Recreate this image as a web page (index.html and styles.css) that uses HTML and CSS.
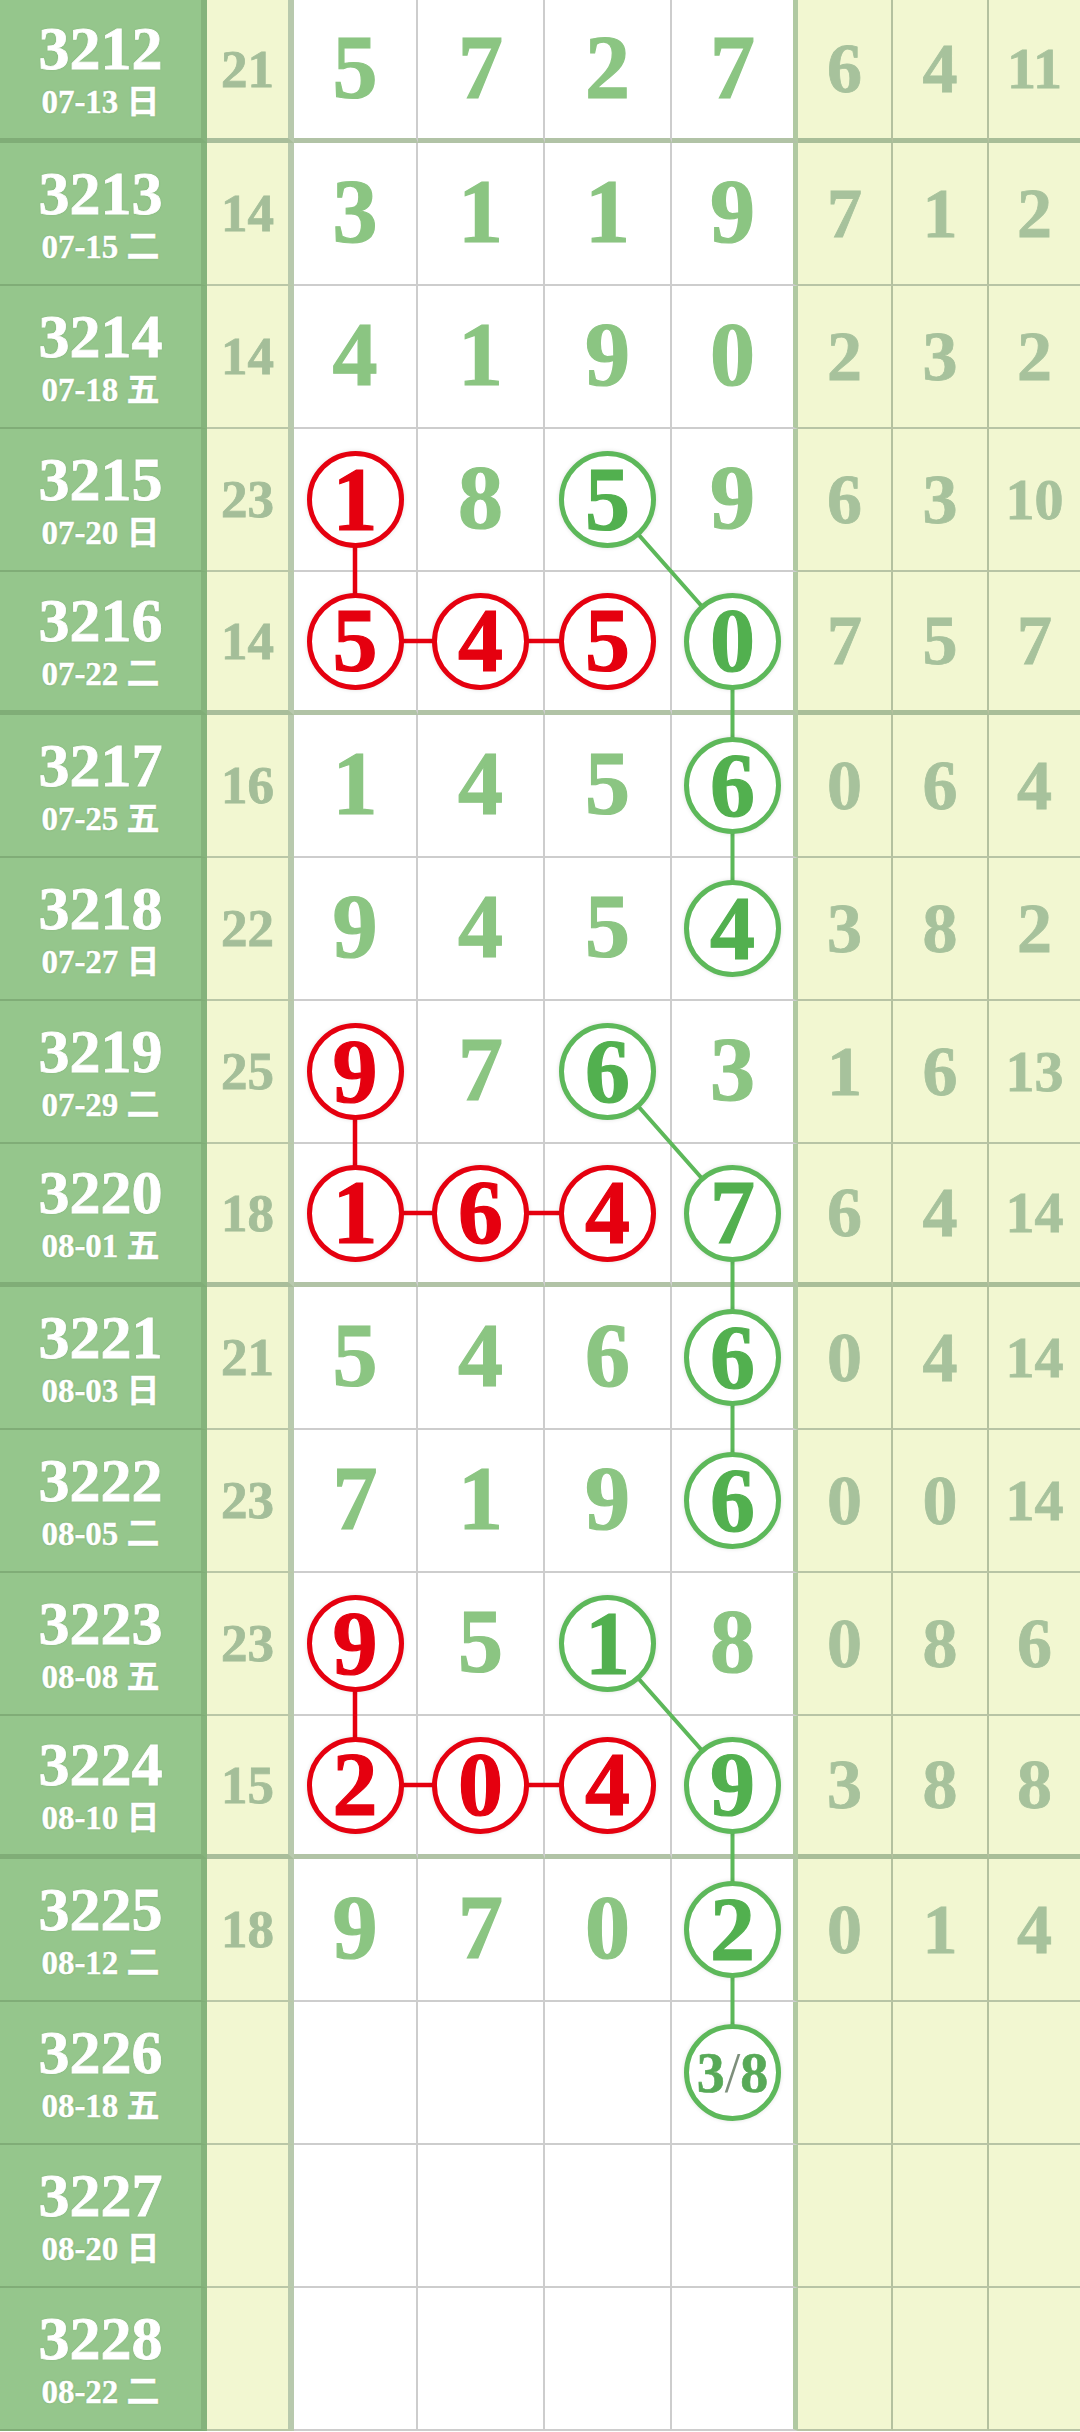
FILE: index.html
```html
<!DOCTYPE html>
<html lang="zh">
<head>
    <meta charset="UTF-8">
    <meta name="viewport" content="width=device-width, initial-scale=1.0">
    <title>走势图</title>
    <link rel="stylesheet" href="styles.css">
</head>
<body>
    <div class="chart">
        <div class="row sep">
            <div class="no"><b>3212</b><span>07-13 日</span></div>
            <div class="sum">21</div>
            <div class="d">5</div><div class="d">7</div><div class="d">2</div><div class="d">7</div>
            <div class="k">6</div><div class="k">4</div><div class="k s">11</div>
        </div>
        <div class="row">
            <div class="no"><b>3213</b><span>07-15 二</span></div>
            <div class="sum">14</div>
            <div class="d">3</div><div class="d">1</div><div class="d">1</div><div class="d">9</div>
            <div class="k">7</div><div class="k">1</div><div class="k">2</div>
        </div>
        <div class="row">
            <div class="no"><b>3214</b><span>07-18 五</span></div>
            <div class="sum">14</div>
            <div class="d">4</div><div class="d">1</div><div class="d">9</div><div class="d">0</div>
            <div class="k">2</div><div class="k">3</div><div class="k">2</div>
        </div>
        <div class="row">
            <div class="no"><b>3215</b><span>07-20 日</span></div>
            <div class="sum">23</div>
            <div class="d"><span class="ball red">1</span></div><div class="d">8</div><div class="d"><span class="ball green">5</span></div><div class="d">9</div>
            <div class="k">6</div><div class="k">3</div><div class="k s">10</div>
        </div>
        <div class="row sep">
            <div class="no"><b>3216</b><span>07-22 二</span></div>
            <div class="sum">14</div>
            <div class="d"><span class="ball red">5</span></div><div class="d"><span class="ball red">4</span></div><div class="d"><span class="ball red">5</span></div><div class="d"><span class="ball green">0</span></div>
            <div class="k">7</div><div class="k">5</div><div class="k">7</div>
        </div>
        <div class="row">
            <div class="no"><b>3217</b><span>07-25 五</span></div>
            <div class="sum">16</div>
            <div class="d">1</div><div class="d">4</div><div class="d">5</div><div class="d"><span class="ball green">6</span></div>
            <div class="k">0</div><div class="k">6</div><div class="k">4</div>
        </div>
        <div class="row">
            <div class="no"><b>3218</b><span>07-27 日</span></div>
            <div class="sum">22</div>
            <div class="d">9</div><div class="d">4</div><div class="d">5</div><div class="d"><span class="ball green">4</span></div>
            <div class="k">3</div><div class="k">8</div><div class="k">2</div>
        </div>
        <div class="row">
            <div class="no"><b>3219</b><span>07-29 二</span></div>
            <div class="sum">25</div>
            <div class="d"><span class="ball red">9</span></div><div class="d">7</div><div class="d"><span class="ball green">6</span></div><div class="d">3</div>
            <div class="k">1</div><div class="k">6</div><div class="k s">13</div>
        </div>
        <div class="row sep">
            <div class="no"><b>3220</b><span>08-01 五</span></div>
            <div class="sum">18</div>
            <div class="d"><span class="ball red">1</span></div><div class="d"><span class="ball red">6</span></div><div class="d"><span class="ball red">4</span></div><div class="d"><span class="ball green">7</span></div>
            <div class="k">6</div><div class="k">4</div><div class="k s">14</div>
        </div>
        <div class="row">
            <div class="no"><b>3221</b><span>08-03 日</span></div>
            <div class="sum">21</div>
            <div class="d">5</div><div class="d">4</div><div class="d">6</div><div class="d"><span class="ball green">6</span></div>
            <div class="k">0</div><div class="k">4</div><div class="k s">14</div>
        </div>
        <div class="row">
            <div class="no"><b>3222</b><span>08-05 二</span></div>
            <div class="sum">23</div>
            <div class="d">7</div><div class="d">1</div><div class="d">9</div><div class="d"><span class="ball green">6</span></div>
            <div class="k">0</div><div class="k">0</div><div class="k s">14</div>
        </div>
        <div class="row">
            <div class="no"><b>3223</b><span>08-08 五</span></div>
            <div class="sum">23</div>
            <div class="d"><span class="ball red">9</span></div><div class="d">5</div><div class="d"><span class="ball green">1</span></div><div class="d">8</div>
            <div class="k">0</div><div class="k">8</div><div class="k">6</div>
        </div>
        <div class="row sep">
            <div class="no"><b>3224</b><span>08-10 日</span></div>
            <div class="sum">15</div>
            <div class="d"><span class="ball red">2</span></div><div class="d"><span class="ball red">0</span></div><div class="d"><span class="ball red">4</span></div><div class="d"><span class="ball green">9</span></div>
            <div class="k">3</div><div class="k">8</div><div class="k">8</div>
        </div>
        <div class="row">
            <div class="no"><b>3225</b><span>08-12 二</span></div>
            <div class="sum">18</div>
            <div class="d">9</div><div class="d">7</div><div class="d">0</div><div class="d"><span class="ball green">2</span></div>
            <div class="k">0</div><div class="k">1</div><div class="k">4</div>
        </div>
        <div class="row">
            <div class="no"><b>3226</b><span>08-18 五</span></div>
            <div class="sum"></div>
            <div class="d"></div><div class="d"></div><div class="d"></div><div class="d"><span class="ball green guess">3<i>/</i>8</span></div>
            <div class="k"></div><div class="k"></div><div class="k"></div>
        </div>
        <div class="row">
            <div class="no"><b>3227</b><span>08-20 日</span></div>
            <div class="sum"></div>
            <div class="d"></div><div class="d"></div><div class="d"></div><div class="d"></div>
            <div class="k"></div><div class="k"></div><div class="k"></div>
        </div>
        <div class="row">
            <div class="no"><b>3228</b><span>08-22 二</span></div>
            <div class="sum"></div>
            <div class="d"></div><div class="d"></div><div class="d"></div><div class="d"></div>
            <div class="k"></div><div class="k"></div><div class="k"></div>
        </div>

        <!-- connection lines, drawn under the balls -->
        <svg class="links" width="1080" height="2432" viewBox="0 0 1080 2432">
            <g class="red-line">
                <path d="M355 499.5 V641 H607.5"/>
                <path d="M355 1071.5 V1213 H607.5"/>
                <path d="M355 1643.5 V1785 H607.5"/>
            </g>
            <g class="green-line">
                <path d="M607.5 499.5 L732.5 641 V928.5"/>
                <path d="M607.5 1071.5 L732.5 1213 V1500.5"/>
                <path d="M607.5 1643.5 L732.5 1785 V2072.5"/>
            </g>
        </svg>
    </div>
</body>
</html>
```

FILE: styles.css
```css
* {
    box-sizing: border-box;
    margin: 0;
    padding: 0;
}
body {
    background: #fff;
    font-family: "Liberation Serif", "Noto Sans CJK SC", serif;
    font-weight: bold;
    -webkit-text-stroke: 0.8px currentColor;
}
.chart {
    position: relative;
    width: 1080px;
}
.row {
    display: grid;
    grid-template-columns: 207px 87px 124px 127px 127px 126px 95px 96px 91px;
    height: 143px;
}
.row > div {
    display: flex;
    align-items: center;
    justify-content: center;
    line-height: 1;
    border-bottom: 2px solid #cdcdcd;
    border-right: 2px solid #cdcdcd;
}
.row.sep > div {
    border-bottom: 5px solid #b1c3a6;
}
.row:last-child > div {
    border-bottom: none;
}

/* 期号列 */
.row > .no {
    flex-direction: column;
    gap: 7px;
    padding-bottom: 2px;
    background: #95c68c;
    color: #fff;
    border-right: 6px solid #85b37c;
    border-bottom-color: #80ad77;
    text-shadow: 0 0 2px rgba(60, 110, 50, 0.35);
}
.row.sep > .no {
    border-bottom-color: #80ad77;
}
.no b {
    font-size: 62px;
    line-height: 62px;
}
.no span {
    font-size: 33px;
    line-height: 33px;
    -webkit-text-stroke: 0.4px currentColor;
}

/* 和值列 */
.row > .sum {
    background: #f2f7d1;
    color: #a4be99;
    font-size: 53px;
    border-right: 6px solid #b8c9ad;
    border-bottom-color: #bac7a7;
}
.row.sep > .sum {
    border-bottom-color: #a9be9b;
}

/* 开奖号码 */
.row > .d {
    background: #fff;
    color: #8bc582;
    font-size: 90px;
    padding-bottom: 3px;
    -webkit-text-stroke: 1.2px currentColor;
}
.row > .d:nth-child(6) {
    border-right: 5px solid #b0c9a1;
}

/* 右侧分区 */
.row > .k {
    background: #f2f7d1;
    color: #a7c29c;
    font-size: 70px;
    border-right-color: #b4c19f;
    border-bottom-color: #b8c4a5;
}
.row.sep > .k {
    border-bottom-color: #a9be98;
}
.row > .k:last-child {
    border-right: none;
}
.row > .k.s {
    font-size: 58px;
}

.ball {
    position: relative;
    z-index: 2;
    width: 97px;
    height: 97px;
    border: 5px solid;
    border-radius: 50%;
    background: #fff;
    display: flex;
    align-items: center;
    justify-content: center;
    font-size: 90px;
    line-height: 1;
    box-shadow: 0 0 4px rgba(0, 0, 0, 0.12);
}
.row > .d:has(.ball) {
    padding-bottom: 0;
}
.ball.red {
    color: #e5000f;
    border-color: #e5000f;
}
.ball.green {
    color: #52b04f;
    border-color: #5db85a;
}
.ball.guess {
    font-size: 56px;
    color: #57a957;
    -webkit-text-stroke: 0.6px currentColor;
}
.ball.guess i {
    font-style: normal;
    font-weight: normal;
    color: #7d8f7b;
    -webkit-text-stroke: 0;
}

.links {
    position: absolute;
    top: 0;
    left: 0;
    z-index: 1;
    pointer-events: none;
}
.links path {
    fill: none;
}
.red-line {
    stroke: #e5000f;
    stroke-width: 4.5;
}
.green-line {
    stroke: #5db85a;
    stroke-width: 4;
}
```
